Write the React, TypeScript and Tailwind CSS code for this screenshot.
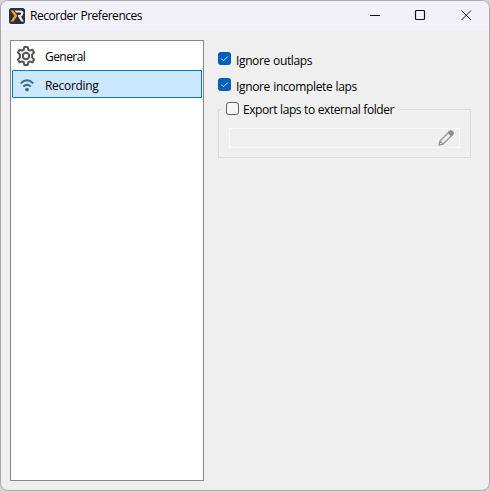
import type { ReactNode } from "react";

function AppLogo() {
  return (
    <svg width="16" height="16" viewBox="0 0 16 16">
      <rect width="16" height="16" rx="2.5" fill="#2b323a" />
      <path d="M1.5 2.5H4.4L8.4 7.8L4.4 13.5H1.5L5.4 7.8Z" fill="#f99d1c" />
      <path d="M5.6 2.5H11.5Q14.6 2.5 14.4 5.3Q14.2 7.6 12 8.6L14.8 13.5H12.2L9.1 8.5V7H10.6Q12 6.8 12.1 5.7Q12.1 4.4 10.8 4.4H7Z" fill="#e8eaed" />
    </svg>
  );
}

function GearIcon() {
  return (
    <svg width="20" height="20" viewBox="0 0 20 20" fill="none" stroke="#555" strokeWidth="2" strokeLinejoin="round">
      <path d="M8.3 1H11.7L12.2 3.6L13.9 4.6L16.4 3.7L18.1 6.6L16.1 8.4V11.6L18.1 13.4L16.4 16.3L13.9 15.4L12.2 16.4L11.7 19H8.3L7.8 16.4L6.1 15.4L3.6 16.3L1.9 13.4L3.9 11.6V8.4L1.9 6.6L3.6 3.7L6.1 4.6L7.8 3.6Z" />
      <circle cx="10" cy="10" r="3.2" />
    </svg>
  );
}

function SignalIcon() {
  return (
    <svg className="mt-[3px]" width="14" height="13" viewBox="0 0 14 13" fill="none" stroke="#42698e" strokeWidth="2">
      <path d="M.7 4.4Q7-1.9 13.3 4.4M3.3 7.6Q7 4.1 10.7 7.6" />
      <circle cx="7" cy="10.6" r="1.9" fill="#42698e" stroke="none" />
    </svg>
  );
}

function PencilIcon() {
  return (
    <svg width="16" height="16" viewBox="0 0 16 16" fill="none" stroke="#969696" strokeWidth="1.3" strokeLinejoin="round">
      <path d="M.9 15.2L2 11L11.3 1.7L14.4 4.8L5.1 14.1ZM2 11L5.1 14.1" />
      <path d="M10.2 2.8L12 1Q13 .4 14 1.2L15 2.3Q15.8 3.2 15 4.1L13.3 5.9Z" fill="#8c8c8c" />
    </svg>
  );
}

function Check({ on }: { on?: boolean }) {
  return on ? (
    <span className="block size-[13px] shrink-0 rounded-[3px] bg-[#005fb8]">
      <svg width="13" height="13" viewBox="0 0 13 13" fill="none" stroke="#d5e6f5" strokeWidth="1">
        <path d="M3.3 6.6L5.5 8.8L9.8 4.5" />
      </svg>
    </span>
  ) : (
    <span className="block size-[13px] shrink-0 rounded-[3px] border border-[#626262] bg-[#f5f5f5]" />
  );
}

function Label({ children, className = "" }: { children: ReactNode; className?: string }) {
  return <span className={`whitespace-nowrap leading-4 ${className}`}>{children}</span>;
}

export default function App() {
  return (
    <div className="h-[491px] w-[490px] overflow-hidden bg-[#d5d5d5] font-['Open_Sans','Noto_Sans',sans-serif] text-[12px] text-black">
      <div className="flex h-full flex-col overflow-hidden rounded-lg border border-[#aaa] bg-[#efefef]">
        <header className="flex h-[30px] shrink-0 items-center bg-[#f2f1f9] pl-2">
          <AppLogo />
          <Label className="ml-[5px] tracking-[-0.47px] [word-spacing:0.5px]">Recorder Preferences</Label>
          <svg className="ml-auto mr-[17px]" width="104" height="12" viewBox="0 0 104 12" fill="none" stroke="#111" strokeWidth="1">
            <path d="M2 5.5H12" strokeWidth="1.1" />
            <rect x="47.5" y="0.5" width="9" height="9" rx="1" strokeWidth="1.2" />
            <path d="M93.5 .5L103 10M103 .5L93.5 10" />
          </svg>
        </header>
        <main className="flex flex-1 pb-[9px] pl-[9px] pt-[9px]">
          <nav className="w-[194px] border border-[#828790] bg-white p-px">
            <div className="flex h-7 items-center pl-[5px]">
              <span className="-ml-px"><GearIcon /></span>
              <Label className="ml-[9px] pt-[2px] tracking-[-0.55px]">General</Label>
            </div>
            <div className="flex h-7 items-center rounded-[1px] border border-[#0078d4] bg-[#cce8ff] pl-[7px]">
              <SignalIcon />
              <Label className="ml-[11px] pt-[3px] tracking-[-0.3px]">Recording</Label>
            </div>
          </nav>
          <section className="ml-[14px] w-[253px] pt-3">
            <div className="flex h-[13px] items-center gap-[5px]">
              <Check on />
              <Label className="pt-[4px] tracking-[-0.37px] [word-spacing:0.5px]">Ignore outlaps</Label>
            </div>
            <div className="mt-[13px] flex h-[13px] items-center gap-[5px]">
              <Check on />
              <Label className="pt-[4px] tracking-[-0.35px] [word-spacing:0.5px]">Ignore incomplete laps</Label>
            </div>
            <fieldset className="mt-[11px] h-14 border border-[#dcdcdc] px-[10px]">
              <legend className="-ml-[7px] flex h-[14px] items-start gap-1 pl-1 pr-[3px]">
                <Check />
                <Label className="tracking-[-0.43px] [word-spacing:0.3px]">Export laps to external folder</Label>
              </legend>
              <div className="mt-3 flex h-5 items-center justify-end border border-[#fafafa] pr-[5px]">
                <PencilIcon />
              </div>
            </fieldset>
          </section>
        </main>
      </div>
    </div>
  );
}
